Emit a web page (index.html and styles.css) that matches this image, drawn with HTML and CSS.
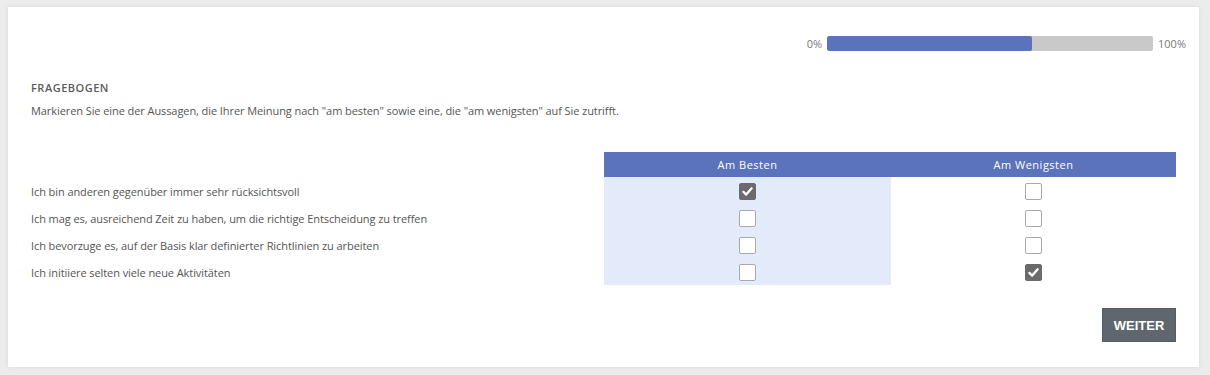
FILE: index.html
```html
<!DOCTYPE html>
<html lang="de">
    <head>
        <meta charset="UTF-8">
        <title>Fragebogen</title>
        <link rel="stylesheet" href="styles.css">
    </head>
    <body>
        <div class="card">
            <div class="progress-row">
                <span class="progress-label">0%</span>
                <div class="progress-track">
                    <div class="progress-fill" style="width: 63%"></div>
                </div>
                <span class="progress-label">100%</span>
            </div>

            <div class="title">FRAGEBOGEN</div>
            <p class="intro">Markieren Sie eine der Aussagen, die Ihrer Meinung nach "am besten" sowie eine, die "am wenigsten" auf Sie zutrifft.</p>

            <div class="choice-table">
                <div class="head-empty"></div>
                <div class="head-cell">Am Besten</div>
                <div class="head-cell">Am Wenigsten</div>

                <div class="statement">Ich bin anderen gegenüber immer sehr rücksichtsvoll</div>
                <div class="cell best"><span class="box checked"><svg viewBox="0 0 16 16"><path d="M3.6 8.4 L6.6 11.3 L12.4 4.6" /></svg></span></div>
                <div class="cell"><span class="box"></span></div>

                <div class="statement">Ich mag es, ausreichend Zeit zu haben, um die richtige Entscheidung zu treffen</div>
                <div class="cell best"><span class="box"></span></div>
                <div class="cell"><span class="box"></span></div>

                <div class="statement">Ich bevorzuge es, auf der Basis klar definierter Richtlinien zu arbeiten</div>
                <div class="cell best"><span class="box"></span></div>
                <div class="cell"><span class="box"></span></div>

                <div class="statement">Ich initiiere selten viele neue Aktivitäten</div>
                <div class="cell best"><span class="box"></span></div>
                <div class="cell"><span class="box checked"><svg viewBox="0 0 16 16"><path d="M3.6 8.4 L6.6 11.3 L12.4 4.6" /></svg></span></div>
            </div>

            <div class="actions">
                <button class="next-btn">WEITER</button>
            </div>
        </div>
    </body>
</html>
```

FILE: styles.css
```css
:root {
    --page-bg: #ececec;
    --text: #555555;
    --muted: #7a7a7a;
    --blue: #5a73ba;
    --light-blue: #e3eafa;
    --track: #c9c9c9;
    --box-border: #a9a9a9;
    --checked: #6b6b6b;
    --btn: #5f666d;
}

body {
    margin: 0;
    padding: 7px 11px 8px 8px;
    background-color: var(--page-bg);
    font-family: "Open Sans", "Liberation Sans", sans-serif;
    color: var(--text);
}

.card {
    background: #ffffff;
    height: 360px;
    box-sizing: border-box;
    padding: 29px 23px 25px 23px;
    box-shadow: 0 0 5px rgba(0, 0, 0, 0.08);
}

.progress-row {
    display: flex;
    justify-content: flex-end;
    align-items: center;
    gap: 5px;
    height: 15px;
    margin-right: -10px;
}

.progress-label {
    font-size: 11px;
    color: var(--muted);
}

.progress-track {
    width: 326px;
    height: 15px;
    background: var(--track);
    border-radius: 2px;
    overflow: hidden;
}

.progress-fill {
    height: 100%;
    background: var(--blue);
    border-radius: 2px;
}

.title {
    margin-top: 29px;
    font-size: 11px;
    line-height: 16px;
    font-weight: 600;
    letter-spacing: 0.5px;
    color: #5c5c5c;
}

.intro {
    margin: 7px 0 0 0;
    font-size: 11px;
    line-height: 16px;
    letter-spacing: -0.08px;
}

.choice-table {
    margin-top: 33px;
    display: grid;
    grid-template-columns: 1fr 287px 285px;
    grid-auto-rows: 27px;
    grid-template-rows: 25px;
}

.head-cell {
    background: var(--blue);
    color: #ffffff;
    font-size: 11px;
    letter-spacing: 0.5px;
    display: flex;
    align-items: center;
    justify-content: center;
}

.statement {
    font-size: 11px;
    letter-spacing: -0.08px;
    display: flex;
    align-items: center;
    padding-top: 1px;
}

.cell {
    display: flex;
    align-items: center;
    justify-content: center;
    padding-top: 1px;
}

.cell.best {
    background: var(--light-blue);
}

.box {
    width: 15px;
    height: 15px;
    border: 1px solid var(--box-border);
    border-radius: 2px;
    background: #ffffff;
    display: flex;
}

.box.checked {
    background: var(--checked);
    border-color: var(--checked);
}

.box svg {
    width: 15px;
    height: 15px;
}

.box path {
    fill: none;
    stroke: #ffffff;
    stroke-width: 2.4;
    stroke-linecap: round;
    stroke-linejoin: round;
}

.actions {
    margin-top: 23px;
    display: flex;
    justify-content: flex-end;
}

.next-btn {
    width: 74px;
    height: 34px;
    border: 1px solid #555c63;
    background: var(--btn);
    color: #ffffff;
    font-family: "Liberation Sans", Arial, sans-serif;
    font-weight: 700;
    font-size: 13px;
    padding: 0;
}
```
